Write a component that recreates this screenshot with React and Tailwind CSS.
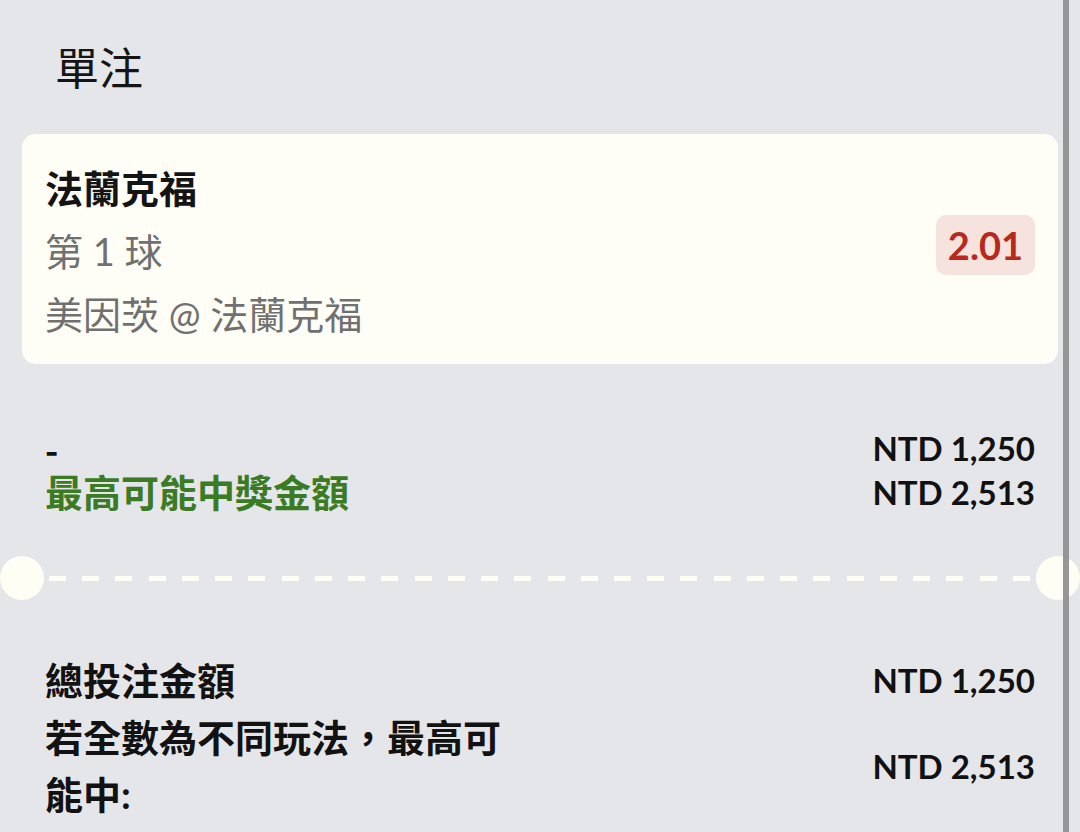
import React from 'react';

const font = "font-['Lato','Noto_Sans_CJK_TC',sans-serif]";

const dashes = Array.from({ length: 30 });

const Amount = ({ children }) => (
  <span className="text-[33px] font-bold text-[#111111] leading-none">{children}</span>
);

const App = () => {
  return (
    <div className={`relative w-[1080px] h-[832px] overflow-hidden bg-[#e5e6e9] ${font}`}>
      <div className="pl-[55px] pt-[37px] text-[44px] leading-[63px] text-[#151515]">單注</div>

      <div className="mx-[22px] mt-[34px] h-[230px] rounded-[14px] bg-[#fffef6] pl-[23px] pr-[23px] pt-[23px] flex items-start justify-between">
        <div className="flex flex-col text-[38px] leading-[63px]">
          <span className="font-bold text-[#141414]">法蘭克福</span>
          <span className="text-[#707070]">第 1 球</span>
          <span className="text-[#707070]">美因茨 @ 法蘭克福</span>
        </div>
        <div className="mt-[58px] h-[60px] px-[12px] rounded-[10px] bg-[#f6e3de] flex items-center">
          <span className="text-[38px] font-bold text-[#b8291d] leading-none">2.01</span>
        </div>
      </div>

      <div className="mt-[62px] px-[45px]">
        <div className="h-[44px] flex items-center justify-between">
          <span className="font-['Noto_Sans_CJK_TC',sans-serif] text-[36px] font-bold text-[#111111] leading-none">-</span>
          <Amount>NTD 1,250</Amount>
        </div>
        <div className="h-[44px] flex items-center justify-between">
          <span className="text-[38px] font-bold text-[#3b7b24] leading-none">最高可能中獎金額</span>
          <Amount>NTD 2,513</Amount>
        </div>
      </div>

      <div className="mt-[42px] h-[44px] flex items-center">
        <div className="w-[44px] h-[44px] rounded-full bg-[#fffef4] shrink-0" />
        <div className="flex-1 pl-[5px] pr-[6px] flex justify-between items-center">
          {dashes.map((_, i) => (
            <div key={i} className="w-[17px] h-[5px] bg-[#fffef4]" />
          ))}
        </div>
        <div className="w-[44px] h-[44px] rounded-full bg-[#fffef4] shrink-0" />
      </div>

      <div className="mt-[52px] px-[45px] text-[38px] font-bold text-[#121212] leading-[57px]">
        <div className="flex items-center justify-between">
          <span>總投注金額</span>
          <Amount>NTD 1,250</Amount>
        </div>
        <div className="flex items-center justify-between">
          <span className="max-w-[470px]">若全數為不同玩法，最高可能中:</span>
          <span className="mb-[4px]">
            <Amount>NTD 2,513</Amount>
          </span>
        </div>
      </div>

      {/* scrollbar */}
      <div className="absolute top-0 bottom-0 right-[11px] w-[6px] bg-[#8c8c8f]/90" />
    </div>
  );
};

export default App;
